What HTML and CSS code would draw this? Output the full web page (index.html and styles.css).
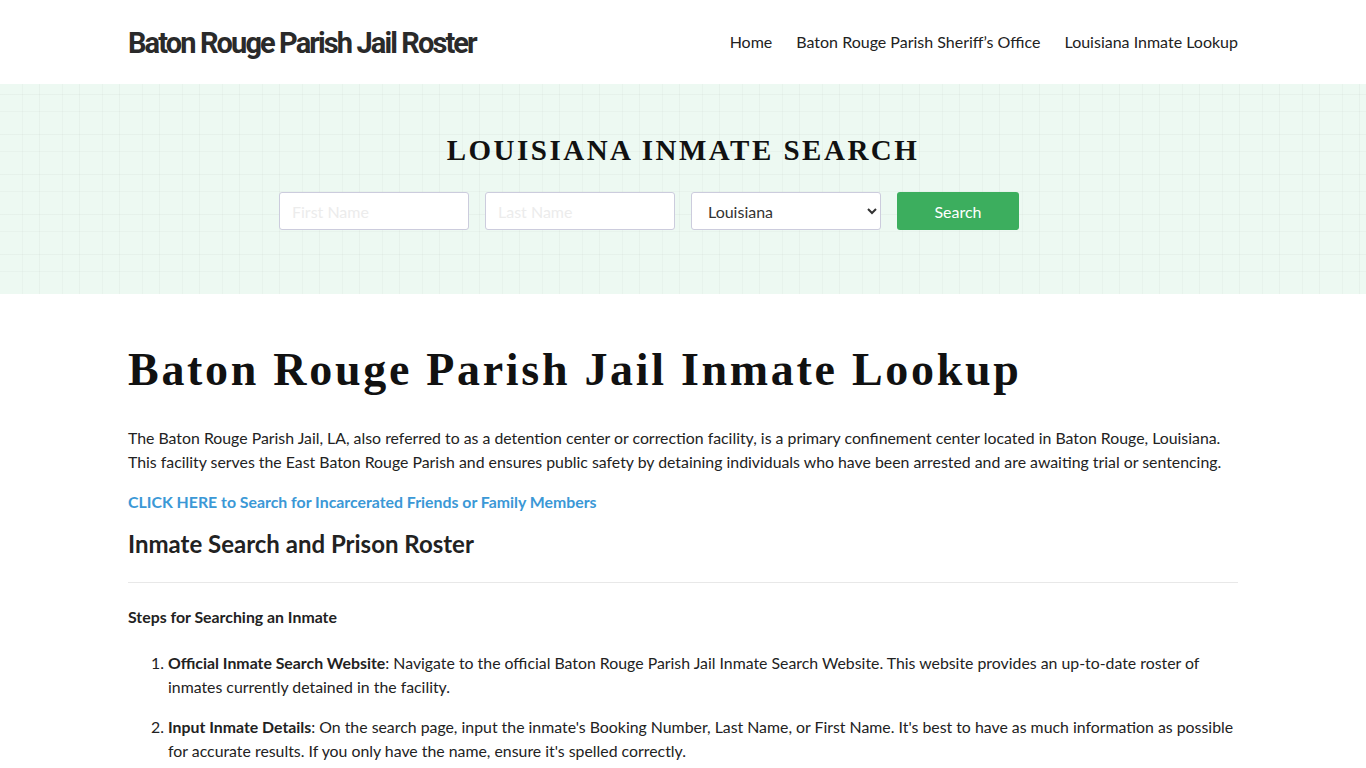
FILE: index.html
```html
<!DOCTYPE html>
<html lang="en">
<head>
  <meta charset="UTF-8">
  <title>Baton Rouge Parish Jail Roster</title>
  <link rel="stylesheet" href="styles.css">
</head>
<body>
  <header class="site-header">
    <div class="container header-row">
      <a class="logo" href="#">Baton Rouge Parish Jail Roster</a>
      <nav class="main-nav">
        <a href="#">Home</a>
        <a href="#">Baton Rouge Parish Sheriff’s Office</a>
        <a href="#">Louisiana Inmate Lookup</a>
      </nav>
    </div>
  </header>

  <section class="hero">
    <h2 class="hero-title">LOUISIANA INMATE SEARCH</h2>
    <form class="search-form">
      <input type="text" placeholder="First Name">
      <input type="text" placeholder="Last Name">
      <select>
        <option>Louisiana</option>
      </select>
      <button type="button">Search</button>
    </form>
  </section>

  <main class="container content">
    <h1 class="page-title">Baton Rouge Parish Jail Inmate Lookup</h1>
    <p>The Baton Rouge Parish Jail, LA, also referred to as a detention center or correction facility, is a primary confinement center located in Baton Rouge, Louisiana. This facility serves the East Baton Rouge Parish and ensures public safety by detaining individuals who have been arrested and are awaiting trial or sentencing.</p>
    <p><a class="cta" href="#">CLICK HERE to Search for Incarcerated Friends or Family Members</a></p>
    <h2 class="section-title">Inmate Search and Prison Roster</h2>
    <hr>
    <p class="steps-label"><b>Steps for Searching an Inmate</b></p>
    <ol class="steps">
      <li><b>Official Inmate Search Website</b>: Navigate to the official Baton Rouge Parish Jail Inmate Search Website. This website provides an up-to-date roster of inmates currently detained in the facility.</li>
      <li><b>Input Inmate Details</b>: On the search page, input the inmate's Booking Number, Last Name, or First Name. It's best to have as much information as possible for accurate results. If you only have the name, ensure it's spelled correctly.</li>
      <li><b>Review Search Results</b>: Browse through the list of results to find the inmate you are looking for.</li>
    </ol>
  </main>
</body>
</html>
```

FILE: styles.css
```css
body {
  margin: 0;
  font-family: 'Lato', 'Open Sans', sans-serif;
  font-size: 15.85px;
  line-height: 24px;
  color: #222;
  background: #fff;
}
a { text-decoration: none; }
.container {
  width: 1110px;
  margin: 0 auto;
}

/* header */
.site-header { height: 84px; }
.header-row {
  display: flex;
  align-items: center;
  justify-content: space-between;
  height: 84px;
}
.logo {
  font-family: 'Roboto', sans-serif;
  font-weight: bold;
  font-size: 29px;
  letter-spacing: -1.9px;
  color: #2a2a2a;
  padding-top: 2px;
}
.main-nav { display: flex; gap: 24px; }
.main-nav a {
  color: #222;
  font-size: 16px;
}

/* hero */
.hero {
  height: 210px;
  box-sizing: border-box;
  padding-top: 46px;
  text-align: center;
  background-color: #edf9f2;
  background-image:
    repeating-linear-gradient(90deg, transparent 0 22px, rgba(0,0,0,0.025) 22px 23px, transparent 23px 40px),
    repeating-linear-gradient(0deg, transparent 0 22px, rgba(0,0,0,0.025) 22px 23px, transparent 23px 40px),
    repeating-linear-gradient(90deg, transparent 0 39px, rgba(0,0,0,0.03) 39px 40px),
    repeating-linear-gradient(0deg, transparent 0 39px, rgba(0,0,0,0.03) 39px 40px);
}
.hero-title {
  margin: 0 0 22px;
  font-family: 'Liberation Serif', serif;
  font-weight: bold;
  font-size: 29px;
  line-height: 40px;
  letter-spacing: 2.5px;
  color: #111;
}
.search-form {
  display: flex;
  justify-content: center;
  gap: 16px;
  padding-right: 68px;
}
.search-form input,
.search-form select {
  width: 190px;
  height: 38px;
  box-sizing: border-box;
  border: 1px solid #ccd;
  border-radius: 3px;
  background: #fff;
  padding: 0 12px;
  font-family: 'Lato', sans-serif;
  font-size: 16px;
  color: #333;
}
.search-form input::placeholder { color: #ececec; }
.search-form button {
  width: 122px;
  height: 38px;
  border: none;
  border-radius: 3px;
  background: #3cae5e;
  color: #fff;
  font-family: 'Lato', sans-serif;
  font-size: 16px;
}

/* content */
.content { padding-top: 48px; }
.page-title {
  margin: 0 0 28px;
  font-family: 'Liberation Serif', serif;
  font-weight: bold;
  font-size: 46px;
  line-height: 56px;
  letter-spacing: 2.7px;
  color: #111;
}
.content p { margin: 0 0 16px; }
.cta {
  color: #3b98d6;
  font-weight: bold;
}
.section-title {
  margin: 0;
  font-size: 24px;
  font-weight: bold;
  line-height: 28px;
  color: #222;
}
.content hr {
  border: 0;
  border-top: 1px solid #e8e8e8;
  margin: 24px 0 22px;
}
.steps-label { margin-bottom: 22px !important; }
.steps {
  margin: 0;
  padding-left: 40px;
}
.steps li { margin-bottom: 16px; }
```
